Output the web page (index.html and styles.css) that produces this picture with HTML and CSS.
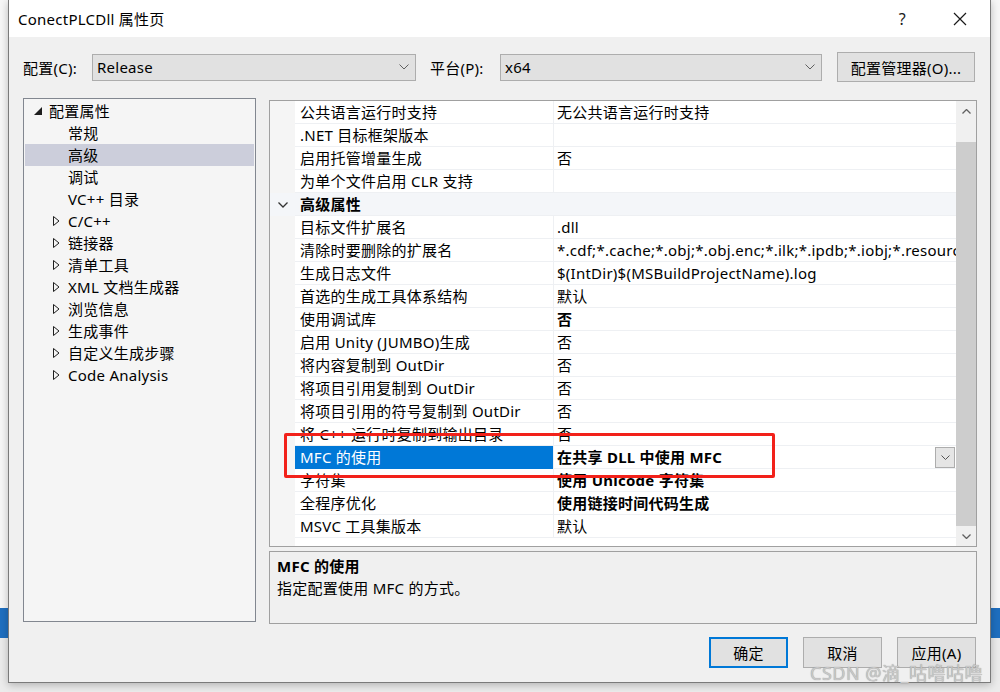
FILE: index.html
```html
<!DOCTYPE html>
<html>

<head>
    <title>ConectPLCDll 属性页</title>
    <link rel="stylesheet" href="styles.css">
</head>

<body>
    <div class="dialog">
        <div class="title-bar">
            <span class="title">ConectPLCDll 属性页</span>
            <span class="title-help">?</span>
            <svg class="title-close" width="14" height="14" viewBox="0 0 14 14">
                <path d="M1 1 L13 13 M13 1 L1 13" stroke="#1a1a1a" stroke-width="1.2" fill="none" />
            </svg>
        </div>

        <div class="config-row">
            <span class="config-label">配置(C):</span>
            <div class="combo combo-config">
                <span>Release</span>
                <svg class="combo-arrow" width="10" height="6" viewBox="0 0 10 6">
                    <path d="M0.5 0.5 L5 5 L9.5 0.5" stroke="#606060" fill="none" />
                </svg>
            </div>
            <span class="config-label platform-label">平台(P):</span>
            <div class="combo combo-platform">
                <span>x64</span>
                <svg class="combo-arrow" width="10" height="6" viewBox="0 0 10 6">
                    <path d="M0.5 0.5 L5 5 L9.5 0.5" stroke="#606060" fill="none" />
                </svg>
            </div>
            <button type="button" class="btn config-manager">配置管理器(O)...</button>
        </div>

        <div class="main">
            <div class="tree">
                <div class="tree-item root">
                    <svg class="tree-expanded" width="8" height="8" viewBox="0 0 8 8">
                        <polygon points="8,0 8,8 0,8" fill="#1e1e1e" />
                    </svg>
                    <span>配置属性</span>
                </div>
                <div class="tree-item leaf">常规</div>
                <div class="tree-item leaf selected">高级</div>
                <div class="tree-item leaf">调试</div>
                <div class="tree-item leaf">VC++ 目录</div>
                <div class="tree-item branch"><svg class="tree-collapsed" width="7" height="10" viewBox="0 0 7 10"><polygon points="0.5,0.5 6,5 0.5,9.5" fill="none" stroke="#1e1e1e" /></svg><span>C/C++</span></div>
                <div class="tree-item branch"><svg class="tree-collapsed" width="7" height="10" viewBox="0 0 7 10"><polygon points="0.5,0.5 6,5 0.5,9.5" fill="none" stroke="#1e1e1e" /></svg><span>链接器</span></div>
                <div class="tree-item branch"><svg class="tree-collapsed" width="7" height="10" viewBox="0 0 7 10"><polygon points="0.5,0.5 6,5 0.5,9.5" fill="none" stroke="#1e1e1e" /></svg><span>清单工具</span></div>
                <div class="tree-item branch"><svg class="tree-collapsed" width="7" height="10" viewBox="0 0 7 10"><polygon points="0.5,0.5 6,5 0.5,9.5" fill="none" stroke="#1e1e1e" /></svg><span>XML 文档生成器</span></div>
                <div class="tree-item branch"><svg class="tree-collapsed" width="7" height="10" viewBox="0 0 7 10"><polygon points="0.5,0.5 6,5 0.5,9.5" fill="none" stroke="#1e1e1e" /></svg><span>浏览信息</span></div>
                <div class="tree-item branch"><svg class="tree-collapsed" width="7" height="10" viewBox="0 0 7 10"><polygon points="0.5,0.5 6,5 0.5,9.5" fill="none" stroke="#1e1e1e" /></svg><span>生成事件</span></div>
                <div class="tree-item branch"><svg class="tree-collapsed" width="7" height="10" viewBox="0 0 7 10"><polygon points="0.5,0.5 6,5 0.5,9.5" fill="none" stroke="#1e1e1e" /></svg><span>自定义生成步骤</span></div>
                <div class="tree-item branch"><svg class="tree-collapsed" width="7" height="10" viewBox="0 0 7 10"><polygon points="0.5,0.5 6,5 0.5,9.5" fill="none" stroke="#1e1e1e" /></svg><span>Code Analysis</span></div>
            </div>

            <div class="right-pane">
                <div class="prop-grid">
                    <div class="prop-rows">
                        <div class="prop-row"><div class="gutter"></div><div class="prop-name">公共语言运行时支持</div><div class="prop-value">无公共语言运行时支持</div></div>
                        <div class="prop-row"><div class="gutter"></div><div class="prop-name">.NET 目标框架版本</div><div class="prop-value"></div></div>
                        <div class="prop-row"><div class="gutter"></div><div class="prop-name">启用托管增量生成</div><div class="prop-value">否</div></div>
                        <div class="prop-row"><div class="gutter"></div><div class="prop-name">为单个文件启用 CLR 支持</div><div class="prop-value"></div></div>
                        <div class="prop-row category">
                            <div class="gutter">
                                <svg width="10" height="6" viewBox="0 0 10 6"><path d="M0.5 0.5 L5 5 L9.5 0.5" stroke="#333" stroke-width="1.3" fill="none" /></svg>
                            </div>
                            <div class="category-name">高级属性</div>
                        </div>
                        <div class="prop-row"><div class="gutter"></div><div class="prop-name">目标文件扩展名</div><div class="prop-value">.dll</div></div>
                        <div class="prop-row"><div class="gutter"></div><div class="prop-name">清除时要删除的扩展名</div><div class="prop-value">*.cdf;*.cache;*.obj;*.obj.enc;*.ilk;*.ipdb;*.iobj;*.resources;*.tlb;*.tli;*.tlh;*.tmp</div></div>
                        <div class="prop-row"><div class="gutter"></div><div class="prop-name">生成日志文件</div><div class="prop-value">$(IntDir)$(MSBuildProjectName).log</div></div>
                        <div class="prop-row"><div class="gutter"></div><div class="prop-name">首选的生成工具体系结构</div><div class="prop-value">默认</div></div>
                        <div class="prop-row"><div class="gutter"></div><div class="prop-name">使用调试库</div><div class="prop-value changed">否</div></div>
                        <div class="prop-row"><div class="gutter"></div><div class="prop-name">启用 Unity (JUMBO)生成</div><div class="prop-value">否</div></div>
                        <div class="prop-row"><div class="gutter"></div><div class="prop-name">将内容复制到 OutDir</div><div class="prop-value">否</div></div>
                        <div class="prop-row"><div class="gutter"></div><div class="prop-name">将项目引用复制到 OutDir</div><div class="prop-value">否</div></div>
                        <div class="prop-row"><div class="gutter"></div><div class="prop-name">将项目引用的符号复制到 OutDir</div><div class="prop-value">否</div></div>
                        <div class="prop-row"><div class="gutter"></div><div class="prop-name">将 C++ 运行时复制到输出目录</div><div class="prop-value">否</div></div>
                        <div class="prop-row selected">
                            <div class="gutter"></div>
                            <div class="prop-name">MFC 的使用</div>
                            <div class="prop-value changed">
                                <span>在共享 DLL 中使用 MFC</span>
                                <div class="value-drop">
                                    <svg width="9" height="5" viewBox="0 0 9 5"><path d="M0.5 0.5 L4.5 4.5 L8.5 0.5" stroke="#555" fill="none" /></svg>
                                </div>
                            </div>
                        </div>
                        <div class="prop-row"><div class="gutter"></div><div class="prop-name">字符集</div><div class="prop-value changed">使用 Unicode 字符集</div></div>
                        <div class="prop-row"><div class="gutter"></div><div class="prop-name">全程序优化</div><div class="prop-value changed">使用链接时间代码生成</div></div>
                        <div class="prop-row"><div class="gutter"></div><div class="prop-name">MSVC 工具集版本</div><div class="prop-value">默认</div></div>
                        <div class="prop-fill"><div class="gutter"></div></div>
                    </div>
                    <div class="scrollbar">
                        <div class="scroll-btn">
                            <svg width="9" height="5" viewBox="0 0 9 5"><path d="M0.5 4.5 L4.5 0.5 L8.5 4.5" stroke="#606060" stroke-width="1.3" fill="none" /></svg>
                        </div>
                        <div class="scroll-track"></div>
                        <div class="scroll-thumb"></div>
                        <div class="scroll-btn">
                            <svg width="9" height="5" viewBox="0 0 9 5"><path d="M0.5 0.5 L4.5 4.5 L8.5 0.5" stroke="#606060" stroke-width="1.3" fill="none" /></svg>
                        </div>
                    </div>
                    <!-- annotation drawn over the screenshot -->
                    <div class="highlight-box"></div>
                </div>
                <div class="description">
                    <div class="desc-title">MFC 的使用</div>
                    <div class="desc-text">指定配置使用 MFC 的方式。</div>
                </div>
            </div>
        </div>

        <div class="control-buttons">
            <button type="button" class="btn default">确定</button>
            <button type="button" class="btn">取消</button>
            <button type="button" class="btn">应用(A)</button>
        </div>

        <div class="watermark">CSDN @滴_咕噜咕噜</div>
    </div>
</body>

</html>
```

FILE: styles.css
```css
body {
    margin: 0;
    width: 1000px;
    height: 692px;
    overflow: hidden;
    font-family: "Noto Sans", "Noto Sans CJK SC", sans-serif;
    font-size: 15px;
    letter-spacing: 0.25px;
    color: #000;
    background: linear-gradient(to bottom, #f7f7f7 0, #f7f7f7 608px, #1f6fc0 608px, #1f6fc0 638px, #ececec 638px);
}

.dialog {
    position: relative;
    margin-left: 8px;
    width: 983px;
    height: 683px;
    box-sizing: border-box;
    border: 1px solid #7a7a7a;
    border-top: none;
    background-color: #f0f0f0;
    box-shadow: 0 2px 8px rgba(0, 0, 0, 0.25);
    display: flex;
    flex-direction: column;
}

.title-bar {
    height: 37px;
    background-color: #fff;
    display: flex;
    align-items: center;
    padding-left: 9px;
}

.title {
    flex: 1;
    font-size: 15px;
}

.title-help {
    font-size: 16px;
    margin-right: 47px;
    color: #1a1a1a;
}

.title-close {
    margin-right: 23px;
}

.config-row {
    display: flex;
    align-items: center;
    height: 30px;
    margin-top: 15px;
    padding-left: 14px;
}

.config-label {
    width: 69px;
}

.platform-label {
    margin-left: 14px;
    width: 70px;
}

.combo {
    height: 27px;
    box-sizing: border-box;
    border: 1px solid #adadad;
    background-color: #e1e1e1;
    display: flex;
    align-items: center;
    justify-content: space-between;
    padding: 0 6px 0 4px;
}

.combo-config {
    width: 324px;
}

.combo-platform {
    width: 322px;
}

.btn {
    font-family: inherit;
    font-size: 15px;
    letter-spacing: 0.25px;
    color: #000;
    background-color: #e1e1e1;
    border: 1px solid #adadad;
    padding: 0;
    height: 31px;
    width: 79px;
}

.config-manager {
    margin-left: 15px;
    width: 138px;
    height: 30px;
}

.main {
    display: flex;
    margin-top: 16px;
    padding-left: 14px;
    gap: 13px;
    height: 526px;
}

.tree {
    width: 233px;
    height: 524px;
    box-sizing: border-box;
    border: 1px solid #828790;
    background-color: #f5f5f5;
    padding: 1px 1px 0 1px;
}

.tree-item {
    height: 22px;
    line-height: 22px;
    display: flex;
    align-items: center;
    white-space: nowrap;
}

.tree-item.root {
    padding-left: 9px;
}

.tree-expanded {
    margin-right: 7px;
    margin-top: -1px;
}

.tree-item.leaf {
    padding-left: 43px;
}

.tree-item.branch {
    padding-left: 28px;
}

.tree-collapsed {
    margin-right: 8px;
}

.tree-item.selected {
    background-color: #cccedb;
}

.right-pane {
    display: flex;
    flex-direction: column;
    width: 708px;
}

.prop-grid {
    position: relative;
    margin-top: 2px;
    height: 447px;
    box-sizing: border-box;
    border: 1px solid #a0a0a0;
    background-color: #fff;
    display: flex;
}

.prop-rows {
    flex: 1;
    display: flex;
    flex-direction: column;
    overflow: hidden;
}

.prop-row {
    display: flex;
    height: 23px;
    flex-shrink: 0;
}

.gutter {
    width: 25px;
    flex-shrink: 0;
    background-color: #f5f5f5;
    display: flex;
    align-items: center;
    justify-content: center;
}

.prop-name,
.prop-value,
.category-name {
    box-sizing: border-box;
    border-bottom: 1px solid #eef0f3;
    line-height: 22px;
    white-space: nowrap;
    overflow: hidden;
}

.prop-name {
    width: 258px;
    padding-left: 5px;
}

.prop-value {
    flex: 1;
    border-left: 1px solid #eef0f3;
    padding-left: 3px;
    display: flex;
    align-items: center;
    justify-content: space-between;
}

.prop-value.changed {
    font-weight: bold;
}

.category {
    background-color: #f4f6f9;
}

.category .gutter {
    background-color: #f4f6f9;
}

.category-name {
    flex: 1;
    padding-left: 5px;
    font-weight: bold;
}

.prop-row.selected .prop-name {
    background-color: #0078d7;
    color: #fff;
    border-bottom-color: #0078d7;
}

.value-drop {
    width: 20px;
    height: 21px;
    box-sizing: border-box;
    border: 1px solid #adadad;
    background-color: #e5e5e5;
    margin-right: 1px;
    display: flex;
    align-items: center;
    justify-content: center;
}

.prop-fill {
    flex: 1;
    display: flex;
}

.scrollbar {
    width: 20px;
    background-color: #f0f0f0;
    display: flex;
    flex-direction: column;
}

.scroll-btn {
    height: 20px;
    display: flex;
    align-items: center;
    justify-content: center;
}

.scroll-track {
    height: 21px;
}

.scroll-thumb {
    flex: 1;
    background-color: #cdcdcd;
}

.highlight-box {
    position: absolute;
    left: 14px;
    top: 332px;
    width: 491px;
    height: 45px;
    box-sizing: border-box;
    border: 3px solid #f2211a;
    border-radius: 2px;
}

.description {
    margin-top: 4px;
    height: 73px;
    box-sizing: border-box;
    border: 1px solid #a0a0a0;
    background-color: #f0f0f0;
    padding: 3px 7px;
}

.desc-title {
    font-weight: bold;
    line-height: 22px;
}

.desc-text {
    line-height: 23px;
}

.control-buttons {
    display: flex;
    justify-content: flex-end;
    gap: 15px;
    margin-top: 13px;
    padding-right: 14px;
}

.btn.default {
    border: 2px solid #0078d7;
}

.watermark {
    position: absolute;
    right: 7px;
    bottom: 0;
    font-size: 18px;
    line-height: 18px;
    color: #c8c8c8;
    letter-spacing: 0.5px;
    text-shadow: 0 0 1px #8a8a8a;
}
```
